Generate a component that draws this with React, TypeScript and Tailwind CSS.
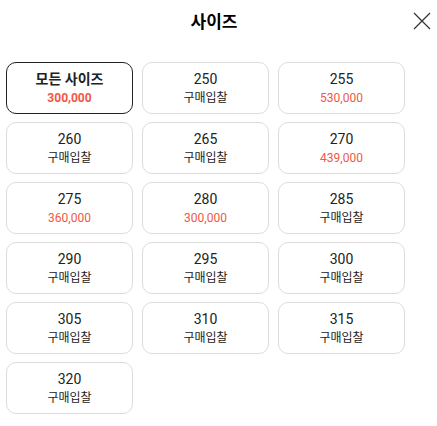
const sizes: { size: string; price?: string }[] = [
  { size: "250" },
  { size: "255", price: "530,000" },
  { size: "260" },
  { size: "265" },
  { size: "270", price: "439,000" },
  { size: "275", price: "360,000" },
  { size: "280", price: "300,000" },
  { size: "285" },
  { size: "290" },
  { size: "295" },
  { size: "300" },
  { size: "305" },
  { size: "310" },
  { size: "315" },
  { size: "320" },
];

const font = { fontFamily: "Roboto, 'Noto Sans CJK KR', sans-serif" };

function SizeCard({ size, price, active }: { size: string; price?: string; active?: boolean }) {
  return (
    <button
      className={`flex h-[52px] flex-col items-center justify-center rounded-[10px] border bg-white ${
        active ? "border-[#222]" : "border-[#dcdcdc]"
      }`}
    >
      <span className={`text-[14px] leading-[17px] text-[#222] ${active ? "font-bold" : ""}`}>{size}</span>
      <span
        className={`mt-[2px] text-[12px] leading-[16px] ${price ? "text-[#f15746]" : "text-[#222]"} ${
          active ? "font-bold" : ""
        }`}
      >
        {price ?? "구매입찰"}
      </span>
    </button>
  );
}

export default function App() {
  return (
    <div className="h-[426px] w-[437px] bg-white" style={font}>
      <div className="relative flex h-[42px] items-center justify-center">
        <h2 className="mr-[9px] text-[17px] font-bold text-black" style={{ fontFamily: "'Noto Sans CJK KR', sans-serif" }}>
          사이즈
        </h2>
        <button className="absolute right-[6px] top-[12px]">
          <svg width="18" height="18" viewBox="0 0 18 18" fill="none" stroke="#333" strokeWidth="1.2">
            <path d="M1 1L17 17M17 1L1 17" />
          </svg>
        </button>
      </div>
      <div className="ml-[6px] mt-[20px] grid w-[399px] grid-cols-3 gap-x-[9px] gap-y-2">
        <SizeCard size="모든 사이즈" price="300,000" active />
        {sizes.map((s) => (
          <SizeCard key={s.size} size={s.size} price={s.price} />
        ))}
      </div>
    </div>
  );
}
